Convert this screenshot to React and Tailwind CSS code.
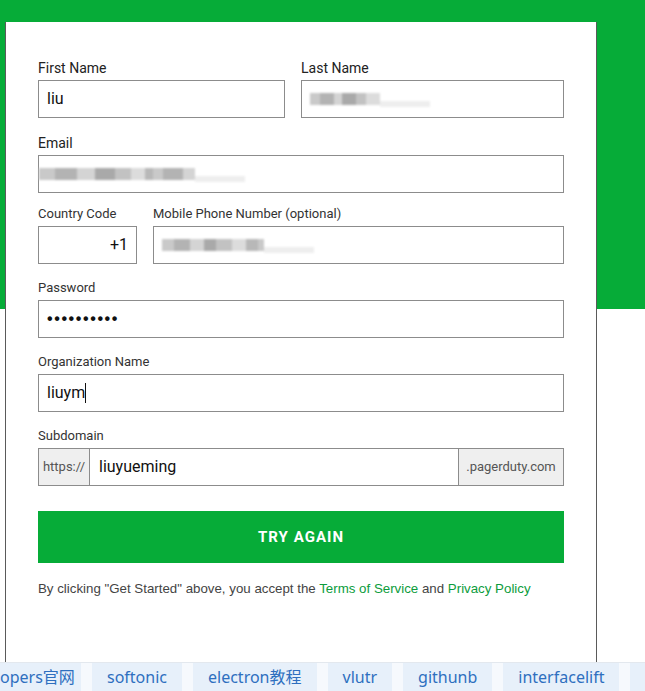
const LABEL_LG = "block text-[14px] leading-[20px] text-[#222] mb-[2px]";
const LABEL_SM = "block text-[13px] leading-[18px] text-[#333] mb-[3px]";
const INPUT = "h-[38px] border border-[#8c8c8c] bg-white flex items-center px-[8px] text-[16px] text-[#111]";

function Blurred({ widths }) {
  const shades = ["#c9c9c9", "#b3b3b3", "#d4d4d4", "#a9a9a9", "#c2c2c2", "#dcdcdc", "#b8b8b8"];
  return (
    <div className="flex items-center blur-[1px]">
      {widths.map((w, i) => (
        <span
          key={i}
          className="h-[12px] inline-block"
          style={{ width: w, background: shades[i % shades.length] }}
        />
      ))}
      <span className="h-[6px] w-[50px] inline-block bg-[#eeeeee] mt-[10px]" />
    </div>
  );
}

const tabs = ["softonic", "electron教程", "vlutr", "githunb", "interfacelift"];

export default function App() {
  return (
    <div
      className="w-[645px] h-[691px] overflow-hidden flex flex-col bg-[linear-gradient(to_bottom,#06ac38_309px,#ffffff_309px)]"
      style={{ fontFamily: "Roboto, 'Liberation Sans', sans-serif" }}
    >
      <div className="h-[22px] shrink-0" />
      <div className="ml-[5px] w-[592px] h-[640px] shrink-0 bg-white border-x border-[#5a5a5a] pl-[32px] pr-[32px] pt-[36px]">
        <div className="w-[526px] flex flex-col">
          <div className="flex gap-[16px]">
            <div className="w-[247px]">
              <label className={LABEL_LG}>First Name</label>
              <div className={INPUT}>liu</div>
            </div>
            <div className="flex-1">
              <label className={LABEL_LG}>Last Name</label>
              <div className={INPUT}>
                <Blurred widths={[10, 14, 8, 14, 10, 14]} />
              </div>
            </div>
          </div>

          <div className="mt-[15px]">
            <label className={LABEL_LG}>Email</label>
            <div className={`${INPUT} pl-0`}>
              <Blurred widths={[16, 22, 18, 20, 16, 14, 8, 10, 20, 12]} />
            </div>
          </div>

          <div className="mt-[12px] flex gap-[16px]">
            <div className="w-[99px]">
              <label className={LABEL_SM}>Country Code</label>
              <div className={`${INPUT} justify-end`}>+1</div>
            </div>
            <div className="flex-1">
              <label className={LABEL_SM}>Mobile Phone Number (optional)</label>
              <div className={INPUT}>
                <Blurred widths={[12, 16, 14, 12, 16, 14, 12, 6]} />
              </div>
            </div>
          </div>

          <div className="mt-[15px]">
            <label className={LABEL_SM}>Password</label>
            <div className={`${INPUT} text-[15px] tracking-[1.6px] font-bold`} style={{ fontFamily: "'Liberation Sans', sans-serif" }}>
              ••••••••••
            </div>
          </div>

          <div className="mt-[15px]">
            <label className={LABEL_SM}>Organization Name</label>
            <div className={INPUT}>
              liuym<span className="inline-block w-px h-[20px] bg-[#111]" />
            </div>
          </div>

          <div className="mt-[15px]">
            <label className={LABEL_SM}>Subdomain</label>
            <div className="h-[38px] flex border border-[#8c8c8c]">
              <div className="w-[51px] bg-[#efefef] border-r border-[#8c8c8c] flex items-center justify-center text-[13px] text-[#555]">
                https://
              </div>
              <div className="flex-1 bg-white flex items-center px-[9px] text-[16px] text-[#111]">
                liuyueming
              </div>
              <div className="w-[105px] bg-[#efefef] border-l border-[#8c8c8c] flex items-center justify-center text-[13px] text-[#555]">
                .pagerduty.com
              </div>
            </div>
          </div>

          <button className="mt-[25px] h-[52px] w-full bg-[#06ac38] text-white font-bold text-[15px] tracking-[0.07em]">
            TRY AGAIN
          </button>

          <p
            className="mt-[17px] text-[13.3px] leading-[18px] text-[#444] whitespace-nowrap"
            style={{ fontFamily: "'Liberation Sans', sans-serif" }}
          >
            By clicking "Get Started" above, you accept the{" "}
            <span className="text-[#0c9c3c]">Terms of Service</span> and{" "}
            <span className="text-[#0c9c3c]">Privacy Policy</span>
          </p>
        </div>
      </div>

      <div
        className="h-[29px] shrink-0 flex items-stretch gap-[11px] bg-[#f6f9fd] border-t border-[#e3e8ee] overflow-hidden text-[16px] text-[#2e6fbf]"
        style={{ fontFamily: "'Noto Sans', 'Noto Sans CJK SC', sans-serif" }}
      >
        <div className="w-[81px] shrink-0 bg-[#e7f0fa] flex items-center whitespace-nowrap">opers官网</div>
        {tabs.map((t) => (
          <div key={t} className="bg-[#e7f0fa] px-[15px] flex items-center whitespace-nowrap">
            {t}
          </div>
        ))}
        <div className="bg-[#e7f0fa] w-[40px] shrink-0" />
      </div>
    </div>
  );
}
